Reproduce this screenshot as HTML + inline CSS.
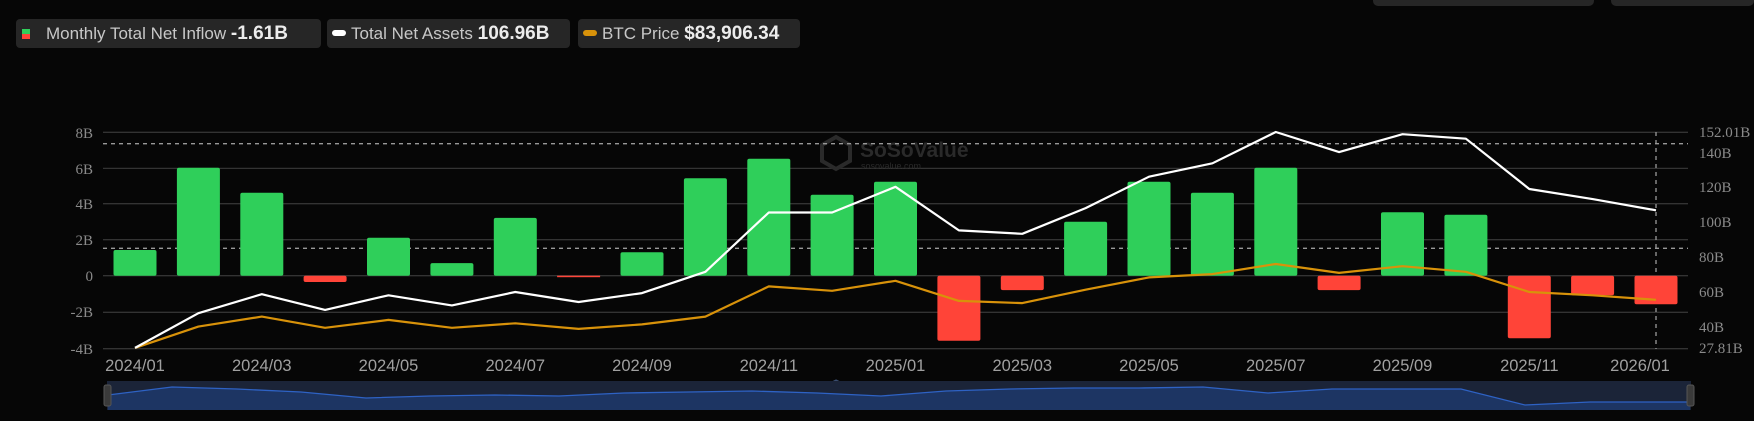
<!DOCTYPE html>
<html><head><meta charset="utf-8"><style>
html,body{margin:0;padding:0;background:#060606;width:1754px;height:421px;overflow:hidden;font-family:"Liberation Sans",sans-serif}
.lg{position:absolute;top:19px;height:29px;background:#262626;border-radius:4px;color:#c8c8c8;font-size:17px;line-height:29px;white-space:nowrap}
.lg b{color:#ececec;font-size:19px}
.tb{position:absolute;top:0;height:6px;background:#262626;border-radius:0 0 5px 5px}
</style></head><body>
<div class="tb" style="left:1373px;width:221px"></div>
<div class="tb" style="left:1611px;width:143px"></div>
<div class="lg" style="left:16px;width:305px">
 <span style="position:absolute;left:6px;top:10px;width:8px;height:5px;background:#2fcf5a"></span>
 <span style="position:absolute;left:6px;top:15px;width:8px;height:5px;background:#ff4438"></span>
 <span style="position:absolute;left:30px">Monthly Total Net Inflow <b>-1.61B</b></span></div>
<div class="lg" style="left:327px;width:243px">
 <span style="position:absolute;left:5px;top:11px;width:14px;height:6px;background:#fff;border-radius:3px"></span>
 <span style="position:absolute;left:24px">Total Net Assets <b>106.96B</b></span></div>
<div class="lg" style="left:578px;width:222px">
 <span style="position:absolute;left:5px;top:11px;width:14px;height:6px;background:#d8920a;border-radius:3px"></span>
 <span style="position:absolute;left:24px">BTC Price <b>$83,906.34</b></span></div>
<svg width="1754" height="421" style="position:absolute;left:0;top:0" xmlns="http://www.w3.org/2000/svg">
<g stroke="#333" stroke-width="1.3">
<line x1="103" x2="1688" y1="132.3" y2="132.3"/><line x1="103" x2="1688" y1="168.4" y2="168.4"/>
<line x1="103" x2="1688" y1="203.7" y2="203.7"/><line x1="103" x2="1688" y1="239.7" y2="239.7"/>
<line x1="103" x2="1688" y1="275.7" y2="275.7"/><line x1="103" x2="1688" y1="312.3" y2="312.3"/>
<line x1="103" x2="1688" y1="348.7" y2="348.7"/></g>
<g fill="#2a2a2a" font-family="Liberation Sans,sans-serif" font-weight="bold">
<path d="M836 137 L850 145 L850 161 L836 169 L822 161 L822 145 Z" fill="none" stroke="#2a2a2a" stroke-width="4"/>
<text x="860" y="157" font-size="21">SoSoValue</text>
<text x="861" y="169" font-size="9" font-weight="normal">sosovalue.com</text>
<path d="M836 381 L848 387 L848 401 L836 407 L824 401 L824 387 Z" fill="none" stroke="#3a4d70" stroke-width="3"/>
<text x="858" y="399" font-size="19" fill="#3a4d70">SoSoValue</text></g>
<g stroke="#999" stroke-width="1.3" stroke-dasharray="4,4">
<line x1="103" x2="1688" y1="143.7" y2="143.7"/><line x1="103" x2="1688" y1="248.3" y2="248.3"/>
<line x1="1656" x2="1656" y1="132" y2="349"/></g>
<g fill="#2fcf5a">
<rect x="113.5" y="250" width="43" height="25.7" rx="2"/>
<rect x="176.9" y="167.7" width="43" height="108" rx="2"/>
<rect x="240.3" y="192.7" width="43" height="83" rx="2"/>
<rect x="367" y="237.7" width="43" height="38" rx="2"/>
<rect x="430.4" y="263.1" width="43" height="12.6" rx="2"/>
<rect x="493.8" y="217.9" width="43" height="57.8" rx="2"/>
<rect x="620.5" y="252.2" width="43" height="23.5" rx="2"/>
<rect x="683.9" y="178.2" width="43" height="97.5" rx="2"/>
<rect x="747.3" y="158.7" width="43" height="117" rx="2"/>
<rect x="810.6" y="194.7" width="43" height="81" rx="2"/>
<rect x="874" y="181.7" width="43" height="94" rx="2"/>
<rect x="1064.1" y="221.7" width="43" height="54" rx="2"/>
<rect x="1127.5" y="181.7" width="43" height="94" rx="2"/>
<rect x="1190.9" y="192.7" width="43" height="83" rx="2"/>
<rect x="1254.3" y="167.7" width="43" height="108" rx="2"/>
<rect x="1381" y="212.3" width="43" height="63.4" rx="2"/>
<rect x="1444.4" y="214.7" width="43" height="61" rx="2"/></g>
<g fill="#ff4438">
<rect x="303.6" y="275.7" width="43" height="6.3" rx="2"/>
<rect x="557.1" y="275.7" width="43" height="1.5"/>
<rect x="937.4" y="275.7" width="43" height="65" rx="2"/>
<rect x="1000.8" y="275.7" width="43" height="14.4" rx="2"/>
<rect x="1317.6" y="275.7" width="43" height="14.4" rx="2"/>
<rect x="1507.8" y="275.7" width="43" height="62.6" rx="2"/>
<rect x="1571.1" y="275.7" width="43" height="19.6" rx="2"/>
<rect x="1634.5" y="275.7" width="43" height="28.6" rx="2"/></g>
<polyline fill="none" stroke="#d8920a" stroke-width="2.2" stroke-linejoin="round" points="135,347.9 198.4,326.6 261.8,316.6 325.1,327.8 388.5,319.9 451.9,327.8 515.3,323.3 578.6,328.9 642,324.4 705.4,316.6 768.8,286.4 832.1,290.8 895.5,280.8 958.9,300.9 1022.3,303.1 1085.6,289.7 1149,277.4 1212.4,274.1 1275.8,264 1339.1,272.9 1402.5,266.2 1465.9,271.8 1529.3,292 1592.6,295.3 1656,299.8"/>
<polyline fill="none" stroke="#fff" stroke-width="2.2" stroke-linejoin="round" points="135,347.9 198.4,313.2 261.8,294.2 325.1,309.9 388.5,295.3 451.9,305.4 515.3,292 578.6,302 642,293.1 705.4,271.8 768.8,212.5 832.1,212.5 895.5,186.8 958.9,230.4 1022.3,233.8 1085.6,208.1 1149,176.7 1212.4,163.3 1275.8,132 1339.1,152.1 1402.5,134.2 1465.9,138.7 1529.3,189 1592.6,199.1 1656,210.3"/>
<g fill="#8a8a8a" font-family="Liberation Serif,serif" font-size="15" text-anchor="end">
<text x="93" y="138">8B</text><text x="93" y="174">6B</text><text x="93" y="209">4B</text><text x="93" y="245">2B</text><text x="93" y="281">0</text><text x="93" y="317">-2B</text><text x="93" y="354">-4B</text></g>
<g fill="#8a8a8a" font-family="Liberation Serif,serif" font-size="15">
<text x="1699" y="137">152.01B</text><text x="1699" y="158">140B</text><text x="1699" y="192">120B</text><text x="1699" y="227">100B</text><text x="1699" y="262">80B</text><text x="1699" y="297">60B</text><text x="1699" y="332">40B</text><text x="1699" y="353">27.81B</text></g>
<g fill="#a0a0a0" font-size="16.5" text-anchor="middle" font-family="Liberation Sans,sans-serif">
<text x="135" y="371">2024/01</text><text x="261.8" y="371">2024/03</text><text x="388.5" y="371">2024/05</text><text x="515.3" y="371">2024/07</text><text x="642" y="371">2024/09</text><text x="768.8" y="371">2024/11</text><text x="895.5" y="371">2025/01</text><text x="1022.3" y="371">2025/03</text><text x="1149" y="371">2025/05</text><text x="1275.8" y="371">2025/07</text><text x="1402.5" y="371">2025/09</text><text x="1529.3" y="371">2025/11</text><text x="1640" y="371">2026/01</text></g>
<rect x="107" y="381" width="1584" height="29" fill="#1b2438"/>
<polygon fill="#1d3563" points="108,395 172,387 237,389 301,392 366,398 430,396 495,395 559,396 624,393 688,392 752,391 817,393 881,396 946,391 1010,389 1074,388 1139,388 1203,387 1268,393 1332,389 1397,389 1461,389 1525,405 1590,402 1690,402 1690,410 108,410"/>
<polyline fill="none" stroke="#2e62c4" stroke-width="1.3" points="108,395 172,387 237,389 301,392 366,398 430,396 495,395 559,396 624,393 688,392 752,391 817,393 881,396 946,391 1010,389 1074,388 1139,388 1203,387 1268,393 1332,389 1397,389 1461,389 1525,405 1590,402 1690,402"/>
<rect x="104" y="385" width="7" height="21" rx="2" fill="#3a3a3a" stroke="#555"/>
<rect x="1687" y="385" width="7" height="21" rx="2" fill="#3a3a3a" stroke="#555"/>
</svg>
</body></html>
